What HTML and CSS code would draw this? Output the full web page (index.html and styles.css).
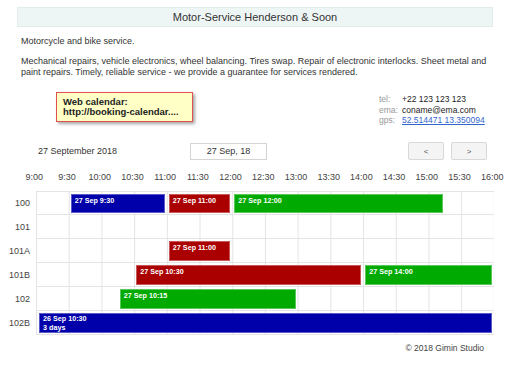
FILE: index.html
```html
<!DOCTYPE html>
<html lang="en">
<head>
    <meta charset="UTF-8">
    <meta name="viewport" content="width=device-width, initial-scale=1.0">
    <title>Motor-Service Henderson &amp; Soon</title>
    <link rel="stylesheet" href="styles.css">
</head>
<body>
    <div class="title">Motor-Service Henderson &amp; Soon</div>

    <div class="about">
        <p>Motorcycle and bike service.</p>
        <p>Mechanical repairs, vehicle electronics, wheel balancing. Tires swap. Repair of electronic interlocks. Sheet metal and paint repairs. Timely, reliable service - we provide a guarantee for services rendered.</p>
    </div>

    <div class="info-row">
        <div class="promo">Web calendar:<br>http://booking-calendar....</div>
        <table class="contact">
            <tr><td class="key">tel:</td><td>+22 123 123 123</td></tr>
            <tr><td class="key">ema:</td><td>coname@ema.com</td></tr>
            <tr><td class="key">gps:</td><td><a href="#">52.514471 13.350094</a></td></tr>
        </table>
    </div>

    <div class="nav-row">
        <span class="day">27 September 2018</span>
        <input class="date-input" type="text" value="27 Sep, 18">
        <div class="nav-buttons">
            <button>&lt;</button>
            <button>&gt;</button>
        </div>
    </div>

    <div class="hours">
        <span>9:00</span><span>9:30</span><span>10:00</span><span>10:30</span><span>11:00</span>
        <span>11:30</span><span>12:00</span><span>12:30</span><span>13:00</span><span>13:30</span>
        <span>14:00</span><span>14:30</span><span>15:00</span><span>15:30</span><span>16:00</span>
    </div>

    <div class="board">
        <div class="row">
            <div class="label">100</div>
            <div class="track">
                <div class="event blue" style="grid-column: 3 / 9">27 Sep 9:30</div>
                <div class="event red" style="grid-column: 9 / 13">27 Sep 11:00</div>
                <div class="event green" style="grid-column: 13 / 26">27 Sep 12:00</div>
            </div>
        </div>
        <div class="row">
            <div class="label">101</div>
            <div class="track"></div>
        </div>
        <div class="row">
            <div class="label">101A</div>
            <div class="track">
                <div class="event red" style="grid-column: 9 / 13">27 Sep 11:00</div>
            </div>
        </div>
        <div class="row">
            <div class="label">101B</div>
            <div class="track">
                <div class="event red" style="grid-column: 7 / 21">27 Sep 10:30</div>
                <div class="event green" style="grid-column: 21 / 29">27 Sep 14:00</div>
            </div>
        </div>
        <div class="row">
            <div class="label">102</div>
            <div class="track">
                <div class="event green" style="grid-column: 6 / 17">27 Sep 10:15</div>
            </div>
        </div>
        <div class="row">
            <div class="label">102B</div>
            <div class="track">
                <div class="event blue early" style="grid-column: 1 / 29">26 Sep 10:30<br>3 days</div>
            </div>
        </div>
    </div>

    <div class="footer">&copy; 2018 Gimin Studio</div>
</body>
</html>
```

FILE: styles.css
```css
body {
    margin: 0;
    font-family: "Liberation Sans", Arial, sans-serif;
    font-size: 9px;
    line-height: 11px;
    color: #333;
    background-color: white;
}

.title {
    margin: 7px 19px 0 17px;
    height: 20px;
    line-height: 19px;
    font-size: 11px;
    text-align: center;
    color: #333;
    background-color: #eef6f5;
    border: 1px solid #e2ecea;
    box-sizing: border-box;
}

.about {
    margin: 9px 21px 0 21px;
}

.about p {
    margin: 0 0 9px 0;
}

.info-row {
    display: flex;
    justify-content: space-between;
    align-items: flex-start;
    margin: 14px 0 0 56px;
}

.promo {
    width: 137px;
    height: 30px;
    box-sizing: border-box;
    padding: 4px 6px;
    font-size: 9.5px;
    line-height: 10px;
    font-weight: bold;
    color: #222;
    background-color: #ffffc6;
    border: 1px solid #e05050;
    box-shadow: 2px 2px 3px rgba(0,0,0,0.35);
}

.contact {
    width: 133px;
    margin-top: 2px;
    border-collapse: collapse;
    font-size: 8.5px;
    line-height: 10.7px;
    color: #222;
}

.contact td {
    padding: 0;
}

.contact .key {
    width: 23px;
    color: #999;
}

.contact a {
    color: #3366cc;
}

.nav-row {
    display: flex;
    align-items: center;
    margin: 16px 0 0 38px;
    height: 18px;
}

.day {
    width: 152px;
}

.date-input {
    width: 77px;
    height: 17px;
    box-sizing: border-box;
    padding: 0;
    border: 1px solid #d4d4d4;
    font-family: inherit;
    font-size: 9px;
    color: #333;
    text-align: center;
}

.nav-buttons {
    display: flex;
    gap: 7px;
    margin-left: 141px;
}

.nav-buttons button {
    width: 36px;
    height: 18px;
    padding: 0;
    background-color: #f4f4f4;
    border: 1px solid #d8d8d8;
    border-radius: 2px;
    font-family: inherit;
    font-size: 8px;
    color: #555;
}

.hours {
    display: grid;
    grid-template-columns: repeat(15, 32.714px);
    margin: 12px 0 0 18px;
    color: #444;
}

.hours span {
    text-align: center;
}

.board {
    margin-top: 8px;
}

.row {
    display: flex;
    height: 24px;
}

.label {
    width: 30px;
    padding-right: 6px;
    line-height: 24px;
    text-align: right;
    color: #444;
}

.track {
    width: 458px;
    display: grid;
    grid-template-columns: repeat(28, 1fr);
    grid-template-rows: 100%;
    box-sizing: border-box;
    border-bottom: 1px solid #e4e4e4;
    background-image: linear-gradient(to right, #e4e4e4 1px, transparent 1px);
    background-size: 32.714px 100%;
}

.row:first-child .track {
    border-top: 1px solid #e4e4e4;
}

.event {
    grid-row: 1;
    margin: 2px 2px 1px 2px;
    padding: 1px 3px;
    font-size: 7.2px;
    line-height: 9px;
    font-weight: bold;
    color: white;
    overflow: hidden;
    white-space: nowrap;
    border: 1px solid rgba(255,255,255,0.35);
}

.event.early {
    margin-left: 3px;
    padding-top: 0;
}

.blue {
    background-color: #0000aa;
}

.red {
    background-color: #aa0000;
}

.green {
    background-color: #00aa00;
}

.footer {
    margin: 8px 28px 0 0;
    text-align: right;
    font-size: 8.5px;
    color: #444;
}
```
